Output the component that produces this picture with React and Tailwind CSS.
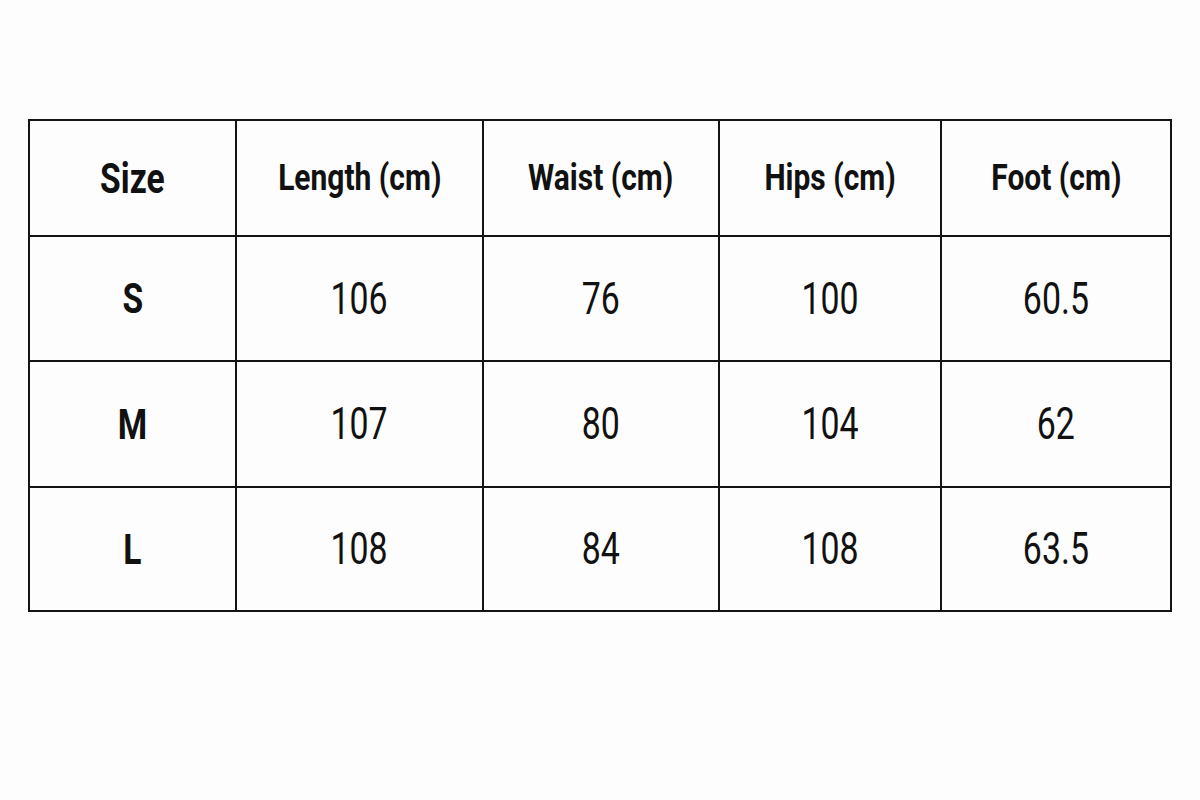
import React from "react";

const headers = ["Size", "Length (cm)", "Waist (cm)", "Hips (cm)", "Foot (cm)"];
const rows = [
  ["S", "106", "76", "100", "60.5"],
  ["M", "107", "80", "104", "62"],
  ["L", "108", "84", "108", "63.5"],
];

export default function App() {
  return (
    <div
      className="w-[1200px] h-[800px] bg-[#fdfdfd] pl-[28px] pt-[119px]"
      style={{ fontFamily: "Roboto, 'Liberation Sans', sans-serif" }}
    >
      <div className="grid grid-cols-[205px_245px_234px_220px_228px] grid-rows-[114px_123px_124px_122px] gap-[2px] p-[2px] bg-[#141414] w-[1144px]">
        {headers.map((h, i) => (
          <div key={h} className="bg-[#fdfdfd] flex items-center justify-center">
            {i === 0 ? (
              <span className="inline-block text-[42px] font-bold text-[#111] scale-x-[0.8] whitespace-nowrap">
                {h}
              </span>
            ) : (
              <span className="inline-block text-[37px] font-bold text-[#111] scale-x-[0.81] whitespace-nowrap">
                {h}
              </span>
            )}
          </div>
        ))}
        {rows.map((r) =>
          r.map((c, i) => (
            <div key={r[0] + i} className="bg-[#fdfdfd] flex items-center justify-center">
              {i === 0 ? (
                <span className="inline-block text-[42px] font-bold text-[#111] scale-x-[0.8]">{c}</span>
              ) : (
                <span className="inline-block text-[44px] font-normal text-[#111] scale-x-[0.77]">{c}</span>
              )}
            </div>
          ))
        )}
      </div>
    </div>
  );
}
